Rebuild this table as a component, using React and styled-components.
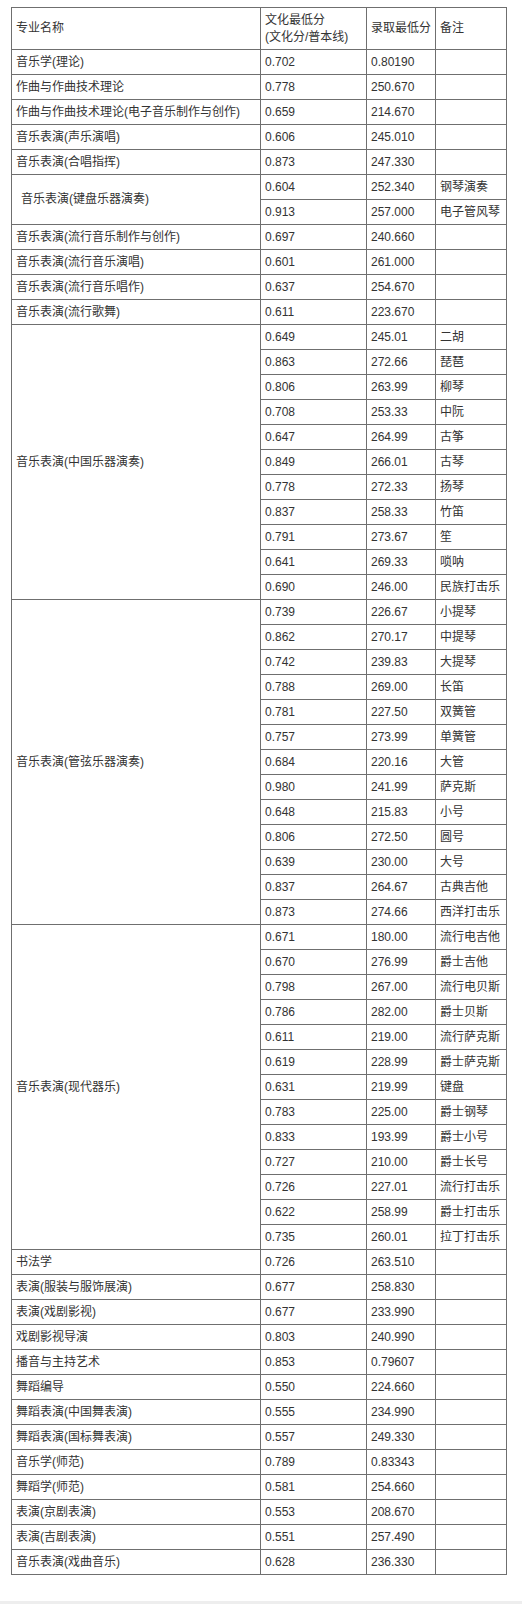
import React from "react";
import styled, { createGlobalStyle } from "styled-components";

const GlobalStyle = createGlobalStyle`
  html, body {
    margin: 0;
    padding: 0;
    background: #fff;
  }
  body {
    font-family: "Liberation Sans", "Noto Sans CJK SC", sans-serif;
    color: #333;
  }
`;

const Page = styled.div`
  width: 522px;
  height: 1604px;
  display: flex;
  flex-direction: column;
  box-sizing: border-box;
`;

const Content = styled.div`
  flex: 1;
  padding: 7px 0 0 11px;
`;

const Footer = styled.div`
  height: 3px;
  background: #eeeeee;
`;

const Table = styled.table`
  border-collapse: collapse;
  table-layout: fixed;
  width: 495px;
  font-size: 12px;
  color: #333;
`;

const Cell = styled.td`
  border: 1px solid #6f6f6f;
  padding: 0 0 0 ${({ $indent }) => ($indent ? "9px" : "4px")};
  height: 24px;
  line-height: 17px;
  vertical-align: middle;
  white-space: nowrap;
  overflow: hidden;
`;

const HeadCell = styled(Cell)`
  height: 41px;
  white-space: normal;
`;

const single = (name, a, b) => [{ name, rows: [[a, b, ""]] }];

const data = [
  ...single("音乐学(理论)", "0.702", "0.80190"),
  ...single("作曲与作曲技术理论", "0.778", "250.670"),
  ...single("作曲与作曲技术理论(电子音乐制作与创作)", "0.659", "214.670"),
  ...single("音乐表演(声乐演唱)", "0.606", "245.010"),
  ...single("音乐表演(合唱指挥)", "0.873", "247.330"),
  {
    name: "音乐表演(键盘乐器演奏)",
    indent: true,
    rows: [
      ["0.604", "252.340", "钢琴演奏"],
      ["0.913", "257.000", "电子管风琴"],
    ],
  },
  ...single("音乐表演(流行音乐制作与创作)", "0.697", "240.660"),
  ...single("音乐表演(流行音乐演唱)", "0.601", "261.000"),
  ...single("音乐表演(流行音乐唱作)", "0.637", "254.670"),
  ...single("音乐表演(流行歌舞)", "0.611", "223.670"),
  {
    name: "音乐表演(中国乐器演奏)",
    rows: [
      ["0.649", "245.01", "二胡"],
      ["0.863", "272.66", "琵琶"],
      ["0.806", "263.99", "柳琴"],
      ["0.708", "253.33", "中阮"],
      ["0.647", "264.99", "古筝"],
      ["0.849", "266.01", "古琴"],
      ["0.778", "272.33", "扬琴"],
      ["0.837", "258.33", "竹笛"],
      ["0.791", "273.67", "笙"],
      ["0.641", "269.33", "唢呐"],
      ["0.690", "246.00", "民族打击乐"],
    ],
  },
  {
    name: "音乐表演(管弦乐器演奏)",
    rows: [
      ["0.739", "226.67", "小提琴"],
      ["0.862", "270.17", "中提琴"],
      ["0.742", "239.83", "大提琴"],
      ["0.788", "269.00", "长笛"],
      ["0.781", "227.50", "双簧管"],
      ["0.757", "273.99", "单簧管"],
      ["0.684", "220.16", "大管"],
      ["0.980", "241.99", "萨克斯"],
      ["0.648", "215.83", "小号"],
      ["0.806", "272.50", "圆号"],
      ["0.639", "230.00", "大号"],
      ["0.837", "264.67", "古典吉他"],
      ["0.873", "274.66", "西洋打击乐"],
    ],
  },
  {
    name: "音乐表演(现代器乐)",
    rows: [
      ["0.671", "180.00", "流行电吉他"],
      ["0.670", "276.99", "爵士吉他"],
      ["0.798", "267.00", "流行电贝斯"],
      ["0.786", "282.00", "爵士贝斯"],
      ["0.611", "219.00", "流行萨克斯"],
      ["0.619", "228.99", "爵士萨克斯"],
      ["0.631", "219.99", "键盘"],
      ["0.783", "225.00", "爵士钢琴"],
      ["0.833", "193.99", "爵士小号"],
      ["0.727", "210.00", "爵士长号"],
      ["0.726", "227.01", "流行打击乐"],
      ["0.622", "258.99", "爵士打击乐"],
      ["0.735", "260.01", "拉丁打击乐"],
    ],
  },
  ...single("书法学", "0.726", "263.510"),
  ...single("表演(服装与服饰展演)", "0.677", "258.830"),
  ...single("表演(戏剧影视)", "0.677", "233.990"),
  ...single("戏剧影视导演", "0.803", "240.990"),
  ...single("播音与主持艺术", "0.853", "0.79607"),
  ...single("舞蹈编导", "0.550", "224.660"),
  ...single("舞蹈表演(中国舞表演)", "0.555", "234.990"),
  ...single("舞蹈表演(国标舞表演)", "0.557", "249.330"),
  ...single("音乐学(师范)", "0.789", "0.83343"),
  ...single("舞蹈学(师范)", "0.581", "254.660"),
  ...single("表演(京剧表演)", "0.553", "208.670"),
  ...single("表演(吉剧表演)", "0.551", "257.490"),
  ...single("音乐表演(戏曲音乐)", "0.628", "236.330"),
];

const App = () => (
  <Page>
    <GlobalStyle />
    <Content>
      <Table>
        <colgroup>
          <col style={{ width: 249 }} />
          <col style={{ width: 106 }} />
          <col style={{ width: 69 }} />
          <col style={{ width: 71 }} />
        </colgroup>
        <tbody>
          <tr>
            <HeadCell>专业名称</HeadCell>
            <HeadCell>
              文化最低分
              <br />
              (文化分/普本线)
            </HeadCell>
            <HeadCell>录取最低分</HeadCell>
            <HeadCell>备注</HeadCell>
          </tr>
          {data.map((group) =>
            group.rows.map((r, i) => (
              <tr key={group.name + i}>
                {i === 0 && (
                  <Cell rowSpan={group.rows.length} $indent={group.indent}>
                    {group.name}
                  </Cell>
                )}
                <Cell>{r[0]}</Cell>
                <Cell>{r[1]}</Cell>
                <Cell>{r[2]}</Cell>
              </tr>
            ))
          )}
        </tbody>
      </Table>
    </Content>
    <Footer />
  </Page>
);

export default App;
